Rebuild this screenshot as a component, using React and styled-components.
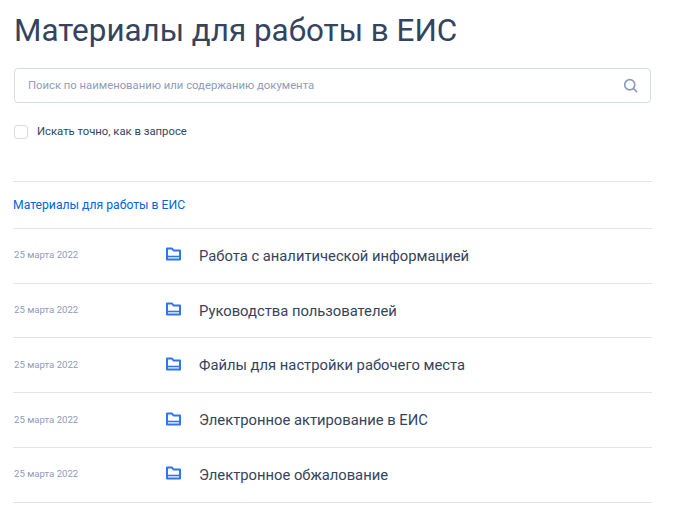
import styled, { createGlobalStyle } from "styled-components";

const GlobalStyle = createGlobalStyle`
  body {
    margin: 0;
    background: #fff;
    font-family: Roboto, "Liberation Sans", sans-serif;
  }
`;

const Wrapper = styled.div`
  width: 676px;
  height: 527px;
  overflow: hidden;
  box-sizing: border-box;
  padding: 0 24px 0 13px;
`;

const Title = styled.h1`
  margin: 0;
  padding: 12px 0 0 1px;
  height: 68px;
  box-sizing: border-box;
  font-size: 31.4px;
  line-height: 38px;
  font-weight: 400;
  color: #34445f;
`;

const SearchBox = styled.div`
  margin-left: 1px;
  width: 637px;
  height: 35px;
  box-sizing: border-box;
  display: flex;
  align-items: center;
  justify-content: space-between;
  padding: 0 12px 0 13px;
  border: 1px solid #d4dbe9;
  border-radius: 4px;
`;

const Placeholder = styled.span`
  font-size: 11.3px;
  color: #8f9bbb;
`;

const CheckRow = styled.label`
  margin: 22px 0 0 1px;
  display: flex;
  align-items: center;
  gap: 9px;
  font-size: 11.3px;
  line-height: 14px;
  color: #34445f;
`;

const CheckBox = styled.span`
  width: 14px;
  height: 14px;
  box-sizing: border-box;
  border: 1px solid #d4dbe9;
  border-radius: 3px;
`;

const Breadcrumbs = styled.div`
  margin-top: 42px;
  height: 48px;
  box-sizing: border-box;
  display: flex;
  align-items: center;
  border-top: 1px solid #dfe4ee;
  border-bottom: 1px solid #dfe4ee;
  font-size: 12.2px;
  color: #0065dd;
`;

const Row = styled.div`
  height: 54.74px;
  box-sizing: border-box;
  display: flex;
  align-items: center;
  border-bottom: 1px solid #dfe4ee;
`;

const DateText = styled.span`
  width: 152px;
  margin: -2px 0 0 1px;
  font-size: 9.6px;
  color: #8f9bbb;
`;

const FolderIcon = styled.svg`
  width: 15px;
  height: 16px;
  margin-top: -3px;
  flex: none;
`;

const RowTitle = styled.span`
  margin-left: 18px;
  font-size: 14.77px;
  color: #34445f;
`;

const rows = [
  "Работа с аналитической информацией",
  "Руководства пользователей",
  "Файлы для настройки рабочего места",
  "Электронное актирование в ЕИС",
  "Электронное обжалование",
];

const Folder = () => (
  <FolderIcon viewBox="0 0 15 16" fill="none" stroke="#2f75ee" strokeWidth="2">
    <path d="M1 13.5V2.5h5l1.5 2H14v9z" strokeLinejoin="round" />
    <path d="M1.5 10.5h12" strokeWidth="1.6" />
  </FolderIcon>
);

const SearchIcon = () => (
  <svg width="15" height="15" viewBox="0 0 16 16" fill="none" stroke="#8f9bbb" strokeWidth="1.8">
    <circle cx="7.2" cy="7.2" r="5.4" />
    <path d="M11.2 11.2l3.3 3.3" strokeLinecap="round" />
  </svg>
);

export default function App() {
  return (
    <Wrapper>
      <GlobalStyle />
      <Title>Материалы для работы в ЕИС</Title>
      <SearchBox>
        <Placeholder>Поиск по наименованию или содержанию документа</Placeholder>
        <SearchIcon />
      </SearchBox>
      <CheckRow>
        <CheckBox />
        Искать точно, как в запросе
      </CheckRow>
      <Breadcrumbs>Материалы для работы в ЕИС</Breadcrumbs>
      {rows.map((row) => (
        <Row key={row}>
          <DateText>25 марта 2022</DateText>
          <Folder />
          <RowTitle>{row}</RowTitle>
        </Row>
      ))}
    </Wrapper>
  );
}
